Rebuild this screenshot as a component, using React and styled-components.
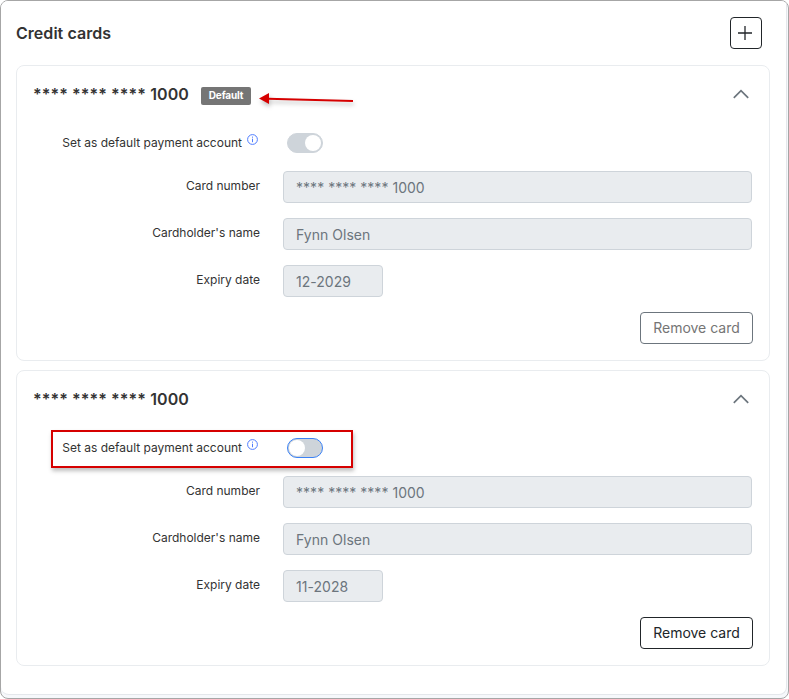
import React, { useState } from "react";
import styled, { createGlobalStyle } from "styled-components";

const GlobalStyle = createGlobalStyle`
  * {
    box-sizing: border-box;
  }

  body {
    margin: 0;
    background: #fff;
    font-family: Inter, "Liberation Sans", sans-serif;
    color: #333;
  }
`;

const Frame = styled.div`
  width: 789px;
  height: 699px;
  padding: 0 1px 3px 0;
  border: 1px solid #a6a6a6;
  border-radius: 8px;
  background: #f6f8fb;
  overflow: hidden;
`;

const Panel = styled.main`
  height: 100%;
  padding: 15px 16px 0 15px;
  border-right: 1px solid #e4e7eb;
  border-bottom: 1px solid #e4e7eb;
  border-radius: 0 0 8px 8px;
  background: #fff;
`;

const Header = styled.header`
  display: flex;
  align-items: center;
  justify-content: space-between;
  height: 34px;
  padding-right: 8px;
  margin-bottom: 15px;
`;

const Title = styled.h1`
  margin: 0;
  font-size: 16px;
  font-weight: 600;
  line-height: 20px;
  letter-spacing: 0.04px;
`;

const AddButton = styled.button`
  display: flex;
  align-items: center;
  justify-content: center;
  width: 32px;
  height: 32px;
  padding: 0 2px 1px 0;
  border: 1px solid #212529;
  border-radius: 4px;
  background: #fff;
  color: #212529;
`;

const Card = styled.section`
  width: 754px;
  height: 296px;
  margin-bottom: 9px;
  border: 1px solid #e9ecef;
  border-radius: 8px;
  background: #fff;
`;

const CardHeader = styled.div`
  display: flex;
  align-items: center;
  height: 56px;
  padding: 0 19px 0 16px;
`;

const CardTitle = styled.h2`
  margin: 0;
  font-size: 16px;
  font-weight: 600;
  line-height: 20px;
  letter-spacing: 0.1px;
`;

const Badge = styled.span`
  width: 50px;
  height: 18px;
  margin: 3px 0 0 12px;
  border-radius: 2px;
  background: #757575;
  color: #fff;
  font-size: 10px;
  font-weight: 700;
  line-height: 17px;
  letter-spacing: -0.15px;
  text-align: center;
`;

const Collapse = styled.button`
  display: flex;
  margin-left: auto;
  padding: 0;
  border: 0;
  background: none;
  color: #6c757d;
`;

const PointerArrow = styled.svg`
  margin: 10px 0 0 6px;
  filter: drop-shadow(1px 3px 2px rgba(0, 0, 0, 0.25));
  overflow: visible;
`;

const Row = styled.div`
  position: relative;
  display: flex;
  align-items: center;
  height: ${({ $toggle }) => ($toggle ? "42px" : "32px")};
  margin-bottom: ${({ $toggle }) => ($toggle ? "7px" : "15px")};
`;

const Label = styled.label`
  display: flex;
  justify-content: flex-end;
  width: 243px;
  margin-right: 23px;
  padding-bottom: ${({ $raised }) => ($raised ? "2px" : "0")};
  font-size: 12px;
  line-height: 18px;
  white-space: nowrap;
`;

const InfoIcon = styled.svg`
  margin: 0 2px 0 5px;
`;

const Input = styled.input`
  width: ${({ $short }) => ($short ? "100px" : "469px")};
  height: 32px;
  padding: 0 12px;
  border: 1px solid #ced4da;
  border-radius: 4px;
  background: #e9ecef;
  color: #6c757d;
  font-family: inherit;
  font-size: 14px;
  letter-spacing: 0.03px;
`;

const Switch = styled.button`
  display: flex;
  align-items: center;
  justify-content: ${({ $on }) => ($on ? "flex-end" : "flex-start")};
  width: 36px;
  height: 20px;
  margin-left: 4px;
  padding: 0 1px;
  border: 1px solid ${({ $on }) => ($on ? "#ced4da" : "#3b82f6")};
  border-radius: 10px;
  background: #ced4da;
`;

const Knob = styled.span`
  width: 16px;
  height: 16px;
  border-radius: 50%;
  background: #fff;
`;

const Highlight = styled.div`
  position: absolute;
  top: 3px;
  left: 34px;
  width: 302px;
  height: 38px;
  border: 2px solid #d60000;
  box-shadow: 1px 3px 4px rgba(0, 0, 0, 0.25);
  pointer-events: none;
`;

const Actions = styled.div`
  display: flex;
  justify-content: flex-end;
  padding-right: 16px;
`;

const RemoveButton = styled.button`
  width: 113px;
  height: 32px;
  padding: 0 0 2px;
  border: 1px solid #212529;
  border-radius: 4px;
  background: #fff;
  color: #212529;
  font-family: inherit;
  font-size: 14px;

  &:disabled {
    border-color: #6c757d;
    color: #757575;
  }
`;

const cards = [
  { id: 1, number: "**** **** **** 1000", holder: "Fynn Olsen", expiry: "12-2029", isDefault: true },
  { id: 2, number: "**** **** **** 1000", holder: "Fynn Olsen", expiry: "11-2028", isDefault: false },
];

const CreditCard = ({ card }) => {
  const [open, setOpen] = useState(true);

  return (
    <Card>
      <CardHeader>
        <CardTitle>{card.number}</CardTitle>
        {card.isDefault && (
          <>
            <Badge>Default</Badge>
            <PointerArrow width="97" height="14" viewBox="0 0 97 14">
              <path d="M11 6.7 L96 9.1" stroke="#d60000" strokeWidth="2" />
              <path d="M2 6.5 L12 1 L12 12 Z" fill="#d60000" />
            </PointerArrow>
          </>
        )}
        <Collapse aria-label="Toggle card" onClick={() => setOpen(!open)}>
          <svg width="18" height="12" viewBox="0 0 18 12" fill="none">
            <path d="M1.8 9.8 L9 2.6 L16.2 9.8" stroke="currentColor" strokeWidth="1.7" />
          </svg>
        </Collapse>
      </CardHeader>
      {open && (
        <>
          <Row $toggle>
            <Label>
              Set as default payment account
              <InfoIcon width="11" height="11" viewBox="0 0 11 11" fill="none">
                <circle cx="5.5" cy="5.5" r="4.9" stroke="#4f7dff" />
                <path d="M5.5 4.7v3.5M5.5 2.6v1.1" stroke="#4f7dff" />
              </InfoIcon>
            </Label>
            <Switch $on={card.isDefault} aria-label="Set as default">
              <Knob />
            </Switch>
            {!card.isDefault && <Highlight />}
          </Row>
          <Row>
            <Label $raised>Card number</Label>
            <Input value={card.number} disabled />
          </Row>
          <Row>
            <Label $raised>Cardholder's name</Label>
            <Input value={card.holder} disabled />
          </Row>
          <Row>
            <Label $raised>Expiry date</Label>
            <Input $short value={card.expiry} disabled />
          </Row>
          <Actions>
            <RemoveButton disabled={card.isDefault}>Remove card</RemoveButton>
          </Actions>
        </>
      )}
    </Card>
  );
};

const App = () => {
  return (
    <>
      <GlobalStyle />
      <Frame>
        <Panel>
          <Header>
            <Title>Credit cards</Title>
            <AddButton aria-label="Add card">
              <svg width="14" height="14" viewBox="0 0 14 14">
                <path d="M7 0v14M0 7h14" stroke="currentColor" strokeWidth="1.3" />
              </svg>
            </AddButton>
          </Header>
          {cards.map((card) => (
            <CreditCard key={card.id} card={card} />
          ))}
        </Panel>
      </Frame>
    </>
  );
};

export default App;
